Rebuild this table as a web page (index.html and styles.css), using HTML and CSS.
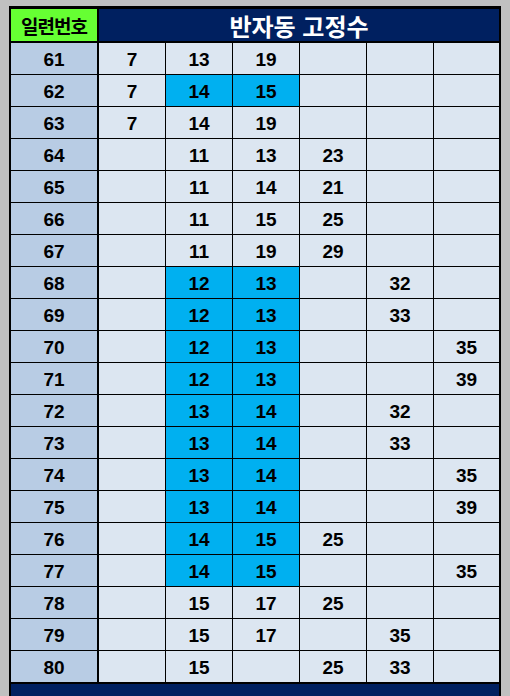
FILE: index.html
```html
<!DOCTYPE html>
<html lang="ko">
<head>
<meta charset="utf-8">
<link rel="stylesheet" href="styles.css">
</head>
<body>
<div class="sheet">
  <div class="hd-id">일련번호</div>
  <div class="hd-title">반자동 고정수</div>

  <div class="id">61</div><div class="c">7</div><div class="c">13</div><div class="c">19</div><div class="c"></div><div class="c"></div><div class="c"></div>
  <div class="id">62</div><div class="c">7</div><div class="c hl">14</div><div class="c hl">15</div><div class="c"></div><div class="c"></div><div class="c"></div>
  <div class="id">63</div><div class="c">7</div><div class="c">14</div><div class="c">19</div><div class="c"></div><div class="c"></div><div class="c"></div>
  <div class="id">64</div><div class="c"></div><div class="c">11</div><div class="c">13</div><div class="c">23</div><div class="c"></div><div class="c"></div>
  <div class="id">65</div><div class="c"></div><div class="c">11</div><div class="c">14</div><div class="c">21</div><div class="c"></div><div class="c"></div>
  <div class="id">66</div><div class="c"></div><div class="c">11</div><div class="c">15</div><div class="c">25</div><div class="c"></div><div class="c"></div>
  <div class="id">67</div><div class="c"></div><div class="c">11</div><div class="c">19</div><div class="c">29</div><div class="c"></div><div class="c"></div>
  <div class="id">68</div><div class="c"></div><div class="c hl">12</div><div class="c hl">13</div><div class="c"></div><div class="c">32</div><div class="c"></div>
  <div class="id">69</div><div class="c"></div><div class="c hl">12</div><div class="c hl">13</div><div class="c"></div><div class="c">33</div><div class="c"></div>
  <div class="id">70</div><div class="c"></div><div class="c hl">12</div><div class="c hl">13</div><div class="c"></div><div class="c"></div><div class="c">35</div>
  <div class="id">71</div><div class="c"></div><div class="c hl">12</div><div class="c hl">13</div><div class="c"></div><div class="c"></div><div class="c">39</div>
  <div class="id">72</div><div class="c"></div><div class="c hl">13</div><div class="c hl">14</div><div class="c"></div><div class="c">32</div><div class="c"></div>
  <div class="id">73</div><div class="c"></div><div class="c hl">13</div><div class="c hl">14</div><div class="c"></div><div class="c">33</div><div class="c"></div>
  <div class="id">74</div><div class="c"></div><div class="c hl">13</div><div class="c hl">14</div><div class="c"></div><div class="c"></div><div class="c">35</div>
  <div class="id">75</div><div class="c"></div><div class="c hl">13</div><div class="c hl">14</div><div class="c"></div><div class="c"></div><div class="c">39</div>
  <div class="id">76</div><div class="c"></div><div class="c hl">14</div><div class="c hl">15</div><div class="c">25</div><div class="c"></div><div class="c"></div>
  <div class="id">77</div><div class="c"></div><div class="c hl">14</div><div class="c hl">15</div><div class="c"></div><div class="c"></div><div class="c">35</div>
  <div class="id">78</div><div class="c"></div><div class="c">15</div><div class="c">17</div><div class="c">25</div><div class="c"></div><div class="c"></div>
  <div class="id">79</div><div class="c"></div><div class="c">15</div><div class="c">17</div><div class="c"></div><div class="c">35</div><div class="c"></div>
  <div class="id">80</div><div class="c"></div><div class="c">15</div><div class="c"></div><div class="c">25</div><div class="c">33</div><div class="c"></div>

  <div class="next"></div>
</div>
</body>
</html>
```
FILE: styles.css
```css
html, body {
  margin: 0;
  padding: 0;
  background: #c0c0c0;
  height: 696px;
  overflow: hidden;
}

.sheet {
  margin: 6px 0 0 9px;
  width: 488px;
  border: 2px solid #000;
  border-top-width: 3px;
  border-bottom: none;
  background: #000;
  display: grid;
  grid-template-columns: 87px repeat(5, 66px) 65px;
  grid-template-rows: 33px;
  grid-auto-rows: 31px;
  column-gap: 1px;
  row-gap: 1px;
  font-family: "Liberation Sans", Arial, sans-serif;
  font-weight: bold;
  font-size: 19px;
  color: #000;
}

.sheet > div {
  display: flex;
  align-items: center;
  justify-content: center;
}

.id, .c {
  padding-top: 3px;
  box-sizing: border-box;
}

.hd-id {
  background: #66ff33;
  margin-right: 1px;
  margin-bottom: 1px;
  font-family: "Noto Sans CJK KR", sans-serif;
  font-size: 19px;
  font-weight: 700;
  letter-spacing: -1px;
  padding-top: 1px;
}

.hd-title {
  grid-column: 2 / 8;
  background: #002060;
  color: #fff;
  margin-bottom: 1px;
  font-family: "Noto Sans CJK KR", sans-serif;
  font-size: 24px;
  font-weight: 700;
  padding-top: 1px;
}

.id {
  background: #b8cce4;
  margin-right: 1px;
}

.c {
  background: #dce6f1;
}

.c.hl {
  background: #00b0f0;
}

.next {
  grid-column: 1 / 8;
  background: #002060;
  margin-top: 1px;
  height: 20px;
}
```
